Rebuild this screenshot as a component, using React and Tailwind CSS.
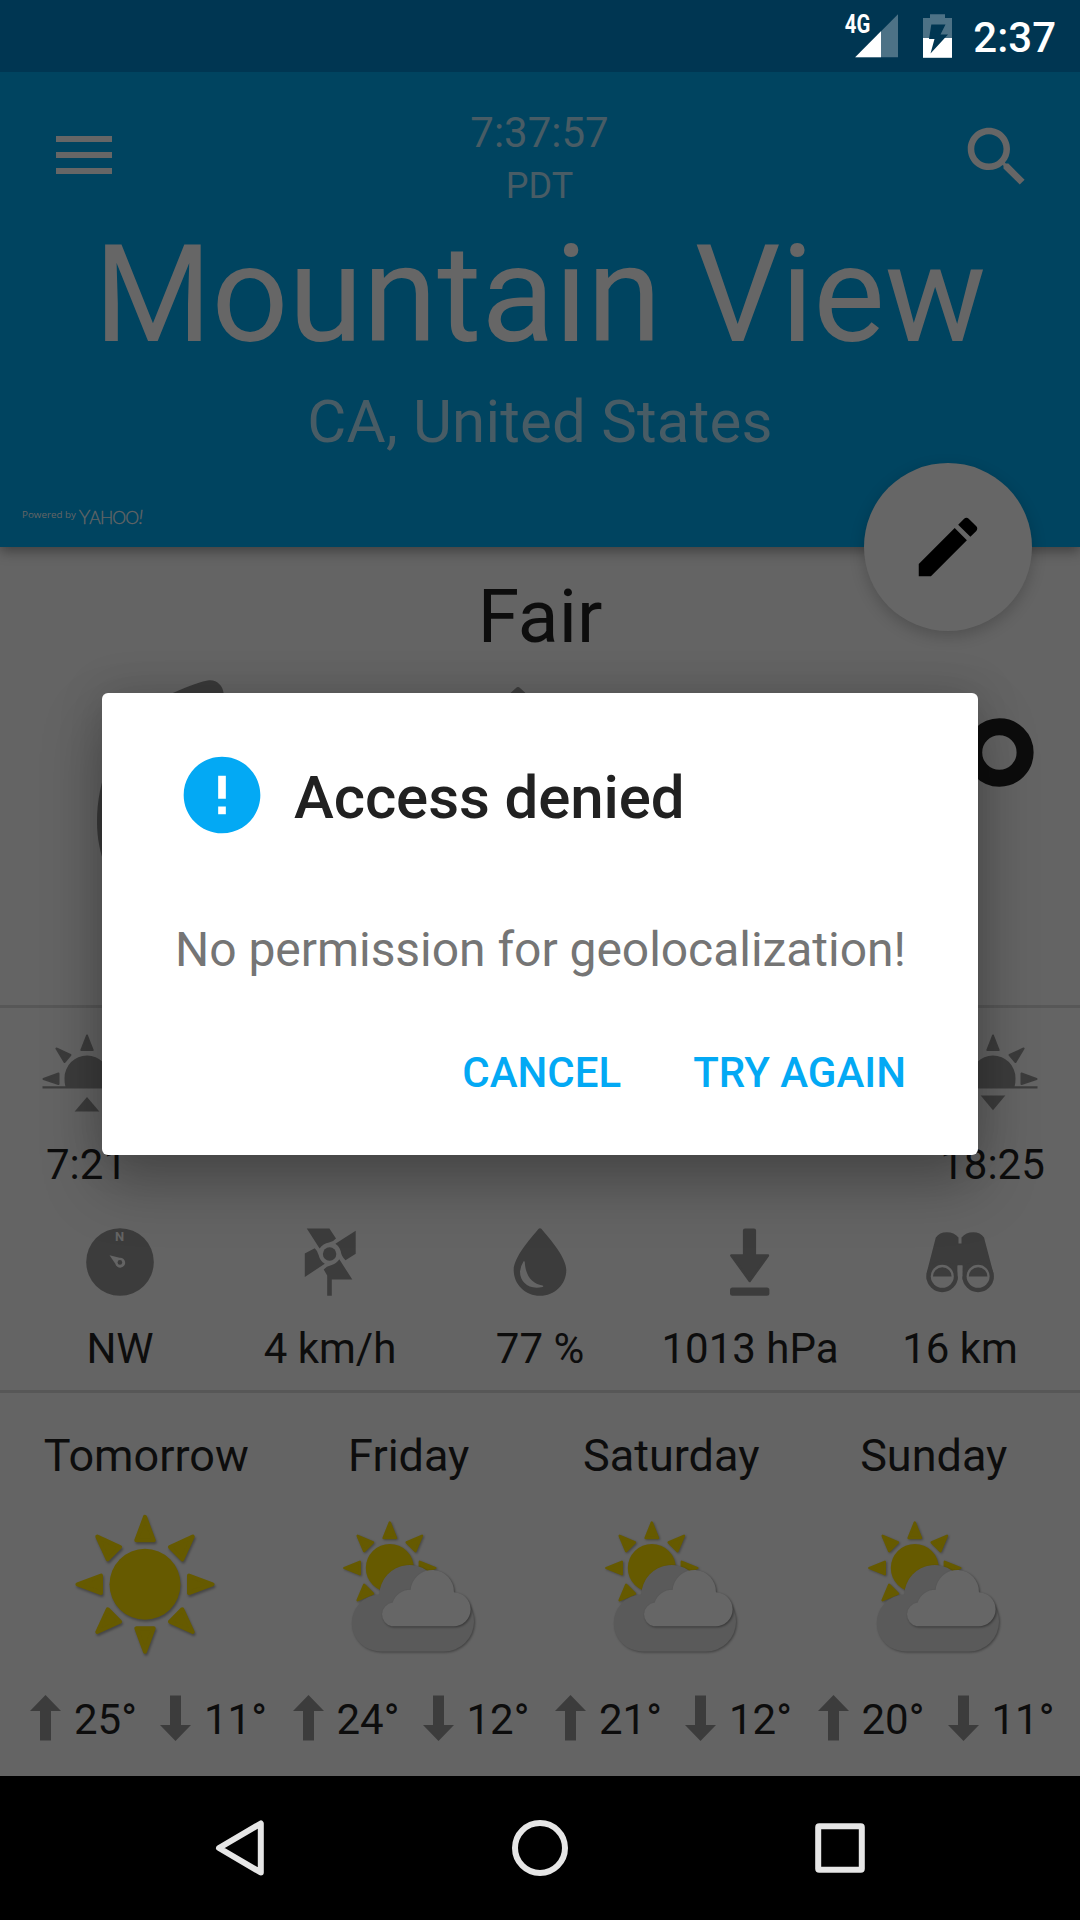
const RAY_ANGLES = [0, 45, 90, 135, 180, 225, 270, 315];

function StatusBar() {
  return (
    <div className="relative z-20 flex h-[72px] items-start justify-end bg-[#003652] pr-[24px] text-white">
      <svg className="h-[60px] w-[60px]" viewBox="840 0 60 60">
        <path d="M898 14.3V57.2H855.2Z" fill="#4d7286" />
        <path d="M881 31.3V57.2H855.2Z" fill="#fff" />
        <text x="844.8" y="33.3" fontSize="25.5" fontWeight="700" fontFamily="Roboto, sans-serif" textLength="25.5" lengthAdjust="spacingAndGlyphs" fill="#fff">4G</text>
      </svg>
      <svg className="mt-[12px] ml-[21px] h-[48px] w-[32px]" viewBox="921 12 32 48">
        <path d="M923 18H930V14.2H945V18H952V38H923Z" fill="#4d7286" />
        <path d="M923 38H952V57.8H923Z" fill="#fff" />
        <path d="M931.3 24.5H945.5L940.5 34.5H948L930.5 53.5L934.5 39H929Z" fill="#003652" />
      </svg>
      <span className="mt-[9px] ml-[20px] text-[42px] leading-[57px] font-medium">2:37</span>
    </div>
  );
}

function Header() {
  return (
    <header className="relative z-10 h-[475px] bg-[#004460] pt-[35px] shadow-[0_4px_12px_rgba(0,0,0,0.38)]">
      <div className="flex h-[106px] items-start pr-[44px] pl-[46px]">
        <svg className="mt-[11px] h-[75px] w-[75px]" viewBox="46 118 75 75" fill="#666">
          <path d="M56 136h56v6H56zM56 152h56v6H56zM56 168h56v6H56z" />
        </svg>
        <div className="flex-1 text-center text-[#485c65]">
          <div className="h-[52px] text-[42px] leading-[52px]">7:37:57</div>
          <div className="h-[54px] text-[36px] leading-[54px]">PDT</div>
        </div>
        <svg className="mt-[10.5px] h-[78px] w-[78px]" viewBox="0 0 24 24" fill="#666">
          <path d="M15.5 14h-.79l-.28-.27C15.41 12.59 16 11.11 16 9.5 16 5.91 13.09 3 9.5 3S3 5.91 3 9.5 5.91 16 9.5 16c1.61 0 3.09-.59 4.23-1.57l.27.28v.79l5 4.99L20.49 19l-4.99-5zm-6 0C7.01 14 5 11.99 5 9.5S7.01 5 9.5 5 14 7.01 14 9.5 11.99 14 9.5 14z" />
        </svg>
      </div>
      <h1 className="h-[164px] text-center text-[135px] leading-[164px] tracking-[-0.15px] whitespace-nowrap text-[#666]">Mountain View</h1>
      <div className="h-[88px] text-center text-[60px] leading-[89px] tracking-[0.2px] text-[#485c65]">CA, United States</div>
      <div className="flex items-start pt-[41px] pl-[22px] text-[#666]">
        <span className="-mt-px font-['Open_Sans'] text-[9.8px] leading-[20px]">Powered by</span>
        <span className="ml-[3px] font-['Lato'] text-[19.5px] leading-[22px] font-light tracking-[-1.2px] [-webkit-text-stroke:0.3px_#666]">Y<span className="text-[17.5px] tracking-[-0.8px]">AHOO</span><span className="italic">!</span></span>
      </div>
      <button className="absolute top-[391px] left-[864px] flex h-[168px] w-[168px] items-center justify-center rounded-full bg-[#666] shadow-[0_5px_15px_rgba(0,0,0,0.2)]">
        <svg className="h-[78px] w-[78px]" viewBox="0 0 24 24" fill="#000">
          <path d="M3 17.25V21h3.75L17.81 9.94l-3.75-3.75L3 17.25zM20.71 7.04c.39-.39.39-1.02 0-1.41l-2.34-2.34c-.39-.39-1.02-.39-1.41 0l-1.83 1.83 3.75 3.75 1.83-1.83z" />
        </svg>
      </button>
    </header>
  );
}

function Conditions() {
  return (
    <section className="h-[461px] border-b-[3px] border-[#575757]">
      <div className="h-[138px] text-center text-[75px] leading-[138px]">Fair</div>
      <div className="flex pr-[45px] pl-[95px]">
        <svg className="-mt-[10px] h-[280px] w-[160px]" viewBox="95 675 160 280">
          <path d="M97 822C97 762 130 711 174 692.5C188 686 203 681 209 680.2C217 679.5 223 686 223.6 693C190 760 200 860 250 930C170 960 97 900 97 822Z" fill="#3a3a3a" />
        </svg>
        <svg className="-mt-[5px] ml-[233px] h-[40px] w-[60px]" viewBox="488 680 60 40">
          <path d="M516 688Q518 686 520 688L542 708H494Z" fill="#3c3c3c" />
        </svg>
        <svg className="mt-[31px] ml-auto h-[72px] w-[72px]" viewBox="963 716 72 72">
          <circle cx="999.4" cy="752.5" r="25.7" fill="none" stroke="#0d0d0d" strokeWidth="17" />
        </svg>
      </div>
    </section>
  );
}

function HorizonSun({ set }) {
  return (
    <svg className="h-[84px] w-[92px]" viewBox="-46 1032 92 84" fill="#3c3c3c">
      <g stroke="#3c3c3c" strokeWidth="2" strokeLinejoin="round">
        <path d="M0 1035.5L5.7 1050H-5.7Z" />
        <path d="M-30.6 1048.5L-16.6 1055L-22.5 1062Z" />
        <path d="M30.6 1048.5L16.6 1055L22.5 1062Z" />
        <path d="M-43.5 1079L-28.5 1073.5V1084Z" />
        <path d="M43.5 1079L28.5 1073.5V1084Z" />
      </g>
      <path d="M-21.5 1087C-22.3 1084 -22.6 1081 -22.5 1078A22.5 22.5 0 0 1 22.5 1078C22.6 1081 22.3 1084 21.5 1087Z" />
      <path d="M-44.5 1086.3H44.5V1088.5H-44.5Z" />
      {set ? <path d="M-12.3 1095.5H12.3L0 1110.3Z" /> : <path d="M-12.3 1111.5H12.3L0 1097Z" />}
    </svg>
  );
}

function Compass() {
  return (
    <svg className="h-[68px] w-[70px]" viewBox="85 1227.5 70 68">
      <circle cx="120" cy="1261.5" r="33.8" fill="#3c3c3c" />
      <text x="119.7" y="1240.2" textAnchor="middle" fontFamily="Roboto, sans-serif" fontWeight="700" fontSize="13" fill="#646464">N</text>
      <path d="M109.5 1254.7L119.6 1257.2A5 5 0 1 1 115.3 1263.2Z" fill="#646464" />
      <circle cx="119.9" cy="1261.9" r="2.3" fill="#3c3c3c" />
    </svg>
  );
}

function Windmill() {
  return (
    <svg className="h-[68px] w-[54px]" viewBox="303 1227.5 54 68" fill="#3c3c3c">
      <path d="M306.8 1228H329.4L336 1238Q333 1241.5 329 1242Q323 1243 319.6 1248Z" />
      <path d="M355.7 1230.3V1253.3L345.5 1259.7Q341.5 1256 340.8 1251Q339.5 1246 335.4 1243.3Z" />
      <path d="M304.8 1276.5V1253L314.7 1247.7Q317.5 1250 318.8 1255Q320 1260.5 324.8 1263.3Z" />
      <path d="M339.3 1258.8L352.3 1279H331.8V1295.3H327.2V1275L323.7 1269Q326.5 1265.5 331 1264.7Q336.5 1263.5 339.3 1258.8Z" />
      <circle cx="329.6" cy="1253.5" r="6.7" />
    </svg>
  );
}

function Droplet() {
  return (
    <svg className="h-[68px] w-[56px]" viewBox="512 1227.5 56 68">
      <path d="M538.7 1228.3Q540 1227 541.3 1228.3C550 1238.5 566.3 1257 566.3 1269.5C566.3 1284 554.5 1295.3 540 1295.3S513.7 1284 513.7 1269.5C513.7 1257 530 1238.5 538.7 1228.3Z" fill="#3c3c3c" />
      <path d="M523.6 1260.8Q525 1260.5 524.8 1262C525.5 1275 532 1283.5 542.5 1285Q544 1285.7 542.5 1286.5C529 1289.5 519.8 1282 520 1271Q520.3 1266 523.6 1260.8Z" fill="#646464" />
    </svg>
  );
}

function Pressure() {
  return (
    <svg className="h-[68px] w-[44px]" viewBox="728 1227.5 44 68" fill="#3c3c3c">
      <rect x="742.9" y="1228" width="13.2" height="40" rx="2.2" />
      <path d="M731.3 1255H768L749.7 1280.5Z" stroke="#3c3c3c" strokeWidth="2.4" strokeLinejoin="round" />
      <rect x="730" y="1287" width="39.4" height="8.3" rx="2.5" />
    </svg>
  );
}

function Binoculars() {
  return (
    <svg className="h-[68px] w-[70px]" viewBox="924.5 1227.5 70 68">
      <g fill="#3c3c3c">
        <path d="M935.3 1237Q939 1231.7 946.3 1231.7T958 1237V1243H961V1237Q965.5 1231.7 972.7 1231.7T983.5 1237L993 1273V1279H962V1265H957V1279H926V1273Z" />
        <circle cx="941.7" cy="1276" r="15.7" />
        <circle cx="977.6" cy="1276" r="15.7" />
      </g>
      <path d="M957.2 1265H961.9Q961.3 1270 962 1276H957.2Z" fill="#646464" />
      <circle cx="941.8" cy="1275.8" r="11.5" fill="#646464" />
      <circle cx="977.6" cy="1275.8" r="11.5" fill="#646464" />
      <path d="M932.5 1276A9.3 9.3 0 0 1 951.1 1276Z" fill="#3c3c3c" />
      <path d="M968.3 1276A9.3 9.3 0 0 1 986.9 1276Z" fill="#3c3c3c" />
    </svg>
  );
}

const METRICS = [
  { Icon: Compass, label: "NW" },
  { Icon: Windmill, label: "4 km/h" },
  { Icon: Droplet, label: "77 %" },
  { Icon: Pressure, label: "1013 hPa" },
  { Icon: Binoculars, label: "16 km" },
];

function Details() {
  return (
    <section className="h-[385px] border-b-[3px] border-[#575757] pt-[24px] text-[42px]">
      <div className="flex justify-between pr-[35px] pl-[34px]">
        <div className="flex w-[105px] flex-col items-center">
          <HorizonSun />
          <span className="mt-[21px] h-[56px] leading-[56px]">7:21</span>
        </div>
        <div className="flex w-[105px] flex-col items-center">
          <HorizonSun set />
          <span className="mt-[21px] h-[56px] leading-[56px]">18:25</span>
        </div>
      </div>
      <div className="mt-[35px] grid grid-cols-5 px-[15px]">
        {METRICS.map(({ Icon, label }) => (
          <div key={label} className="flex flex-col items-center">
            <Icon />
            <span className="mt-[25px] h-[56px] leading-[56px] whitespace-nowrap">{label}</span>
          </div>
        ))}
      </div>
    </section>
  );
}

function Sunny() {
  return (
    <svg className="h-[144px] w-[152px] drop-shadow-[1px_2px_1px_rgba(0,0,0,0.3)]" viewBox="-75 -72.3 152 144" fill="#665a00">
      <circle r="35.5" />
      {RAY_ANGLES.map((a) => (
        <path key={a} transform={`rotate(${a})`} d="M0 -67.5L8.7 -44H-8.7Z" stroke="#665a00" strokeWidth="4" strokeLinejoin="round" />
      ))}
    </svg>
  );
}

function PartlyCloudy() {
  return (
    <svg className="h-[144px] w-[150px]" viewBox="334 1512 150 144">
      <g className="drop-shadow-[1px_1px_1px_rgba(0,0,0,0.3)]" fill="#665a00">
        <circle cx="389.8" cy="1568" r="24" />
        {[225, 270, 315, 0, 45, 90].map((a) => (
          <path key={a} transform={`translate(389.8 1568) rotate(${a})`} d="M0 -45.5L6.2 -30H-6.2Z" stroke="#665a00" strokeWidth="2.4" strokeLinejoin="round" />
        ))}
      </g>
      <path className="drop-shadow-[1px_1.5px_1px_rgba(0,0,0,0.35)]" fill="#5a5a5a" d="M380.5 1651.5A28.6 28.6 0 0 1 351.8 1623A28.6 28.6 0 0 1 379.3 1594.5A30.3 30.3 0 0 1 439 1588L444 1591.5A30 30 0 0 1 444 1651.5Z" />
      <path className="drop-shadow-[1px_1.5px_1px_rgba(0,0,0,0.4)]" fill="#666" d="M391.8 1626.3A12 12 0 0 1 392.6 1602.6A18.5 18.5 0 0 1 410.6 1589.7A21.7 21.7 0 0 1 453.9 1592.3A17 17 0 0 1 453.4 1626.3Z" />
    </svg>
  );
}

function Temperature({ down, value }) {
  return (
    <div className="flex w-[130px] items-start pl-[15px]">
      <svg className={down ? "mt-px h-[46px] w-[31px] rotate-180" : "mt-px h-[46px] w-[31px]"} viewBox="0 0 31 46" fill="#3c3c3c">
        <path d="M15.5 0L31 16H21V45.5H10V16H0Z" />
      </svg>
      <span className="ml-[13px] h-[51px] leading-[51px]">{value}</span>
    </div>
  );
}

const DAYS = [
  { name: "Tomorrow", Icon: Sunny, high: "25°", low: "11°" },
  { name: "Friday", Icon: PartlyCloudy, high: "24°", low: "12°" },
  { name: "Saturday", Icon: PartlyCloudy, high: "21°", low: "12°" },
  { name: "Sunday", Icon: PartlyCloudy, high: "20°", low: "11°" },
];

function Forecast() {
  return (
    <section className="grid h-[383px] grid-cols-4 px-[15px] pt-[33px]">
      {DAYS.map(({ name, Icon, high, low }) => (
        <div key={name} className="flex flex-col items-center">
          <span className="h-[60px] text-[45px] leading-[60px]">{name}</span>
          <div className="mt-[26px]"><Icon /></div>
          <div className="mt-[38px] flex w-full text-[42px]">
            <Temperature value={high} />
            <Temperature down value={low} />
          </div>
        </div>
      ))}
    </section>
  );
}

function Dialog() {
  return (
    <div className="absolute top-[693px] left-[102px] z-20 h-[462px] w-[876px] rounded-[6px] bg-white shadow-[0_30px_60px_rgba(0,0,0,0.25),0_0_45px_rgba(0,0,0,0.15)]">
      <div className="flex h-[140px] items-start pt-[56px] pl-[74px]">
        <svg className="h-[92px] w-[92px]" viewBox="0 0 24 24" fill="#03a9f4">
          <path d="M12 2C6.48 2 2 6.48 2 12s4.48 10 10 10 10-4.48 10-10S17.52 2 12 2zm1 15h-2v-2h2v2zm0-4h-2V7h2v6z" />
        </svg>
        <h2 className="mt-[9px] ml-[26px] text-[60px] leading-[80px] font-medium tracking-[-0.1px] text-[#212121]">Access denied</h2>
      </div>
      <p className="mt-[87px] pl-[73px] text-[48px] leading-[60px] tracking-[-0.04px] whitespace-nowrap text-[#757575]">No permission for geolocalization!</p>
      <div className="mt-[63px] flex justify-end gap-[72px] pr-[72px] text-[42px] leading-[60px] font-medium text-[#03a9f4]">
        <button>CANCEL</button>
        <button>TRY AGAIN</button>
      </div>
    </div>
  );
}

function NavBar() {
  return (
    <nav className="flex h-[144px] items-center justify-center gap-[240px] bg-black">
      <svg className="h-[60px] w-[60px]" viewBox="210 1818 60 60" fill="none" stroke="#e6e6e6" strokeWidth="6" strokeLinejoin="round">
        <path d="M260.8 1823.5V1872.5L219 1848Z" />
      </svg>
      <svg className="h-[60px] w-[60px]" viewBox="-30 -30 60 60" fill="none" stroke="#e6e6e6" strokeWidth="6">
        <circle r="25" />
      </svg>
      <svg className="h-[60px] w-[60px]" viewBox="-30 -30 60 60" fill="none" stroke="#e6e6e6" strokeWidth="6">
        <rect x="-21.8" y="-21.8" width="43.6" height="43.6" rx="1" strokeLinejoin="round" />
      </svg>
    </nav>
  );
}

export default function App() {
  return (
    <div className="relative h-[1920px] w-[1080px] overflow-hidden bg-[#646464] font-['Roboto',sans-serif] text-[#0d0d0d]">
      <StatusBar />
      <Header />
      <Conditions />
      <Details />
      <Forecast />
      <NavBar />
      <Dialog />
    </div>
  );
}
